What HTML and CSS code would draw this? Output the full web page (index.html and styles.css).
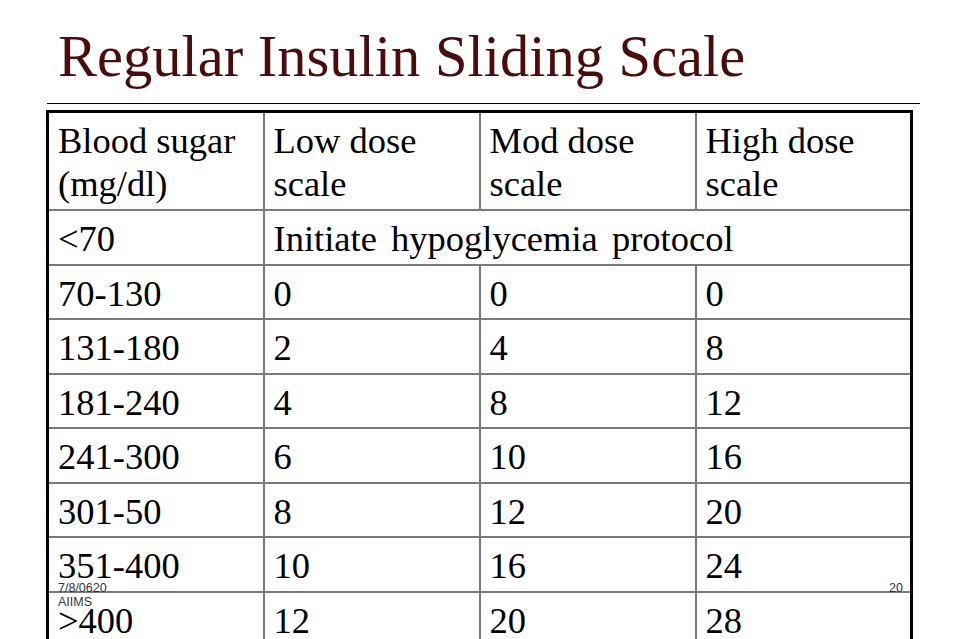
FILE: index.html
```html
<!DOCTYPE html>
<html lang="en">
<head>
<meta charset="utf-8">
<title>Regular Insulin Sliding Scale</title>
<link rel="stylesheet" href="styles.css">
</head>
<body>
<div class="slide">
  <h1 class="title">Regular Insulin Sliding Scale</h1>
  <div class="rule"></div>
  <table class="scale">
    <colgroup><col class="c"><col class="c"><col class="c"><col class="c"></colgroup>
    <tr class="head">
      <td>Blood sugar (mg/dl)</td>
      <td>Low dose scale</td>
      <td>Mod dose scale</td>
      <td>High dose scale</td>
    </tr>
    <tr><td>&lt;70</td><td colspan="3" class="wide">Initiate hypoglycemia protocol</td></tr>
    <tr><td>70-130</td><td>0</td><td>0</td><td>0</td></tr>
    <tr><td>131-180</td><td>2</td><td>4</td><td>8</td></tr>
    <tr><td>181-240</td><td>4</td><td>8</td><td>12</td></tr>
    <tr><td>241-300</td><td>6</td><td>10</td><td>16</td></tr>
    <tr><td>301-50</td><td>8</td><td>12</td><td>20</td></tr>
    <tr><td>351-400</td><td>10</td><td>16</td><td>24</td></tr>
    <tr><td>&gt;400</td><td>12</td><td>20</td><td>28</td></tr>
  </table>
  <div class="foot-left">7/8/0620<br>AIIMS</div>
  <div class="foot-right">20</div>
</div>
</body>
</html>
```

FILE: styles.css
```css
html, body {
  margin: 0;
  padding: 0;
  height: 639px;
  overflow: hidden;
  background: #fff;
}
.slide {
  position: relative;
  width: 960px;
  height: 639px;
  font-family: "Liberation Serif", "Times New Roman", serif;
  color: #000;
}
.title {
  margin: 0;
  padding: 27px 0 0 58px;
  font-size: 58.5px;
  line-height: 60px;
  font-weight: normal;
  color: #4a0d0d;
}
.rule {
  margin: 16px 40px 0 47px;
  border-top: 1px solid #000;
}
.scale {
  margin: 6px 0 0 46px;
  border-collapse: collapse;
  table-layout: fixed;
  border: 3px solid #000;
}
.scale .c {
  width: 216px;
}
.scale td {
  border: 2px solid #7a7a7a;
  padding: 6px 8px 3.5px 9px;
  vertical-align: top;
  font-size: 36.5px;
  line-height: 43px;
}
.scale td.wide {
  word-spacing: 5px;
}
.scale tr.head td {
  height: 86.5px;
}
.foot-left {
  position: absolute;
  left: 58px;
  top: 581px;
  font-family: "Liberation Sans", Arial, sans-serif;
  font-size: 12.5px;
  line-height: 14px;
  color: #333;
}
.foot-right {
  position: absolute;
  left: 889px;
  top: 581px;
  font-family: "Liberation Sans", Arial, sans-serif;
  font-size: 12.5px;
  line-height: 14px;
  color: #333;
}
```
